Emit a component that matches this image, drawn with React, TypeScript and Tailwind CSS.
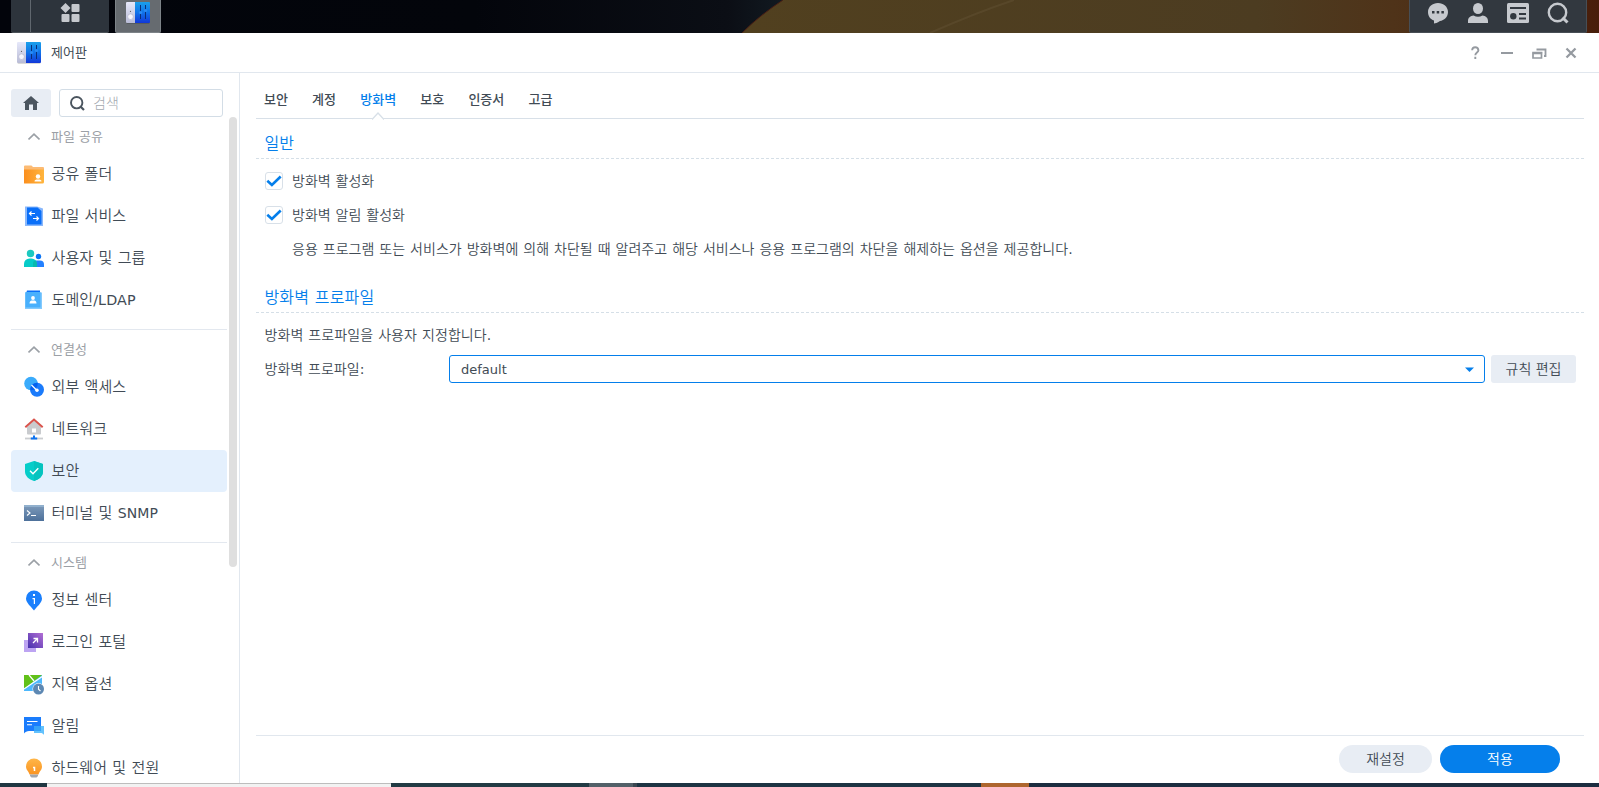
import type { ReactNode } from "react";

type NavItem = { label: ReactNode; icon: ReactNode; active?: boolean };
type NavGroup = { title: string; items: NavItem[] };

function ControlPanelIcon() {
  return (
    <svg width="24" height="22" viewBox="0 0 24 22" className="shrink-0">
      <defs>
        <linearGradient id="cpBlue" x1="0" y1="0" x2="0" y2="1">
          <stop offset="0" stopColor="#1aa0ea" />
          <stop offset="0.5" stopColor="#1173ea" />
          <stop offset="1" stopColor="#1238d8" />
        </linearGradient>
        <linearGradient id="cpGray" x1="0" y1="0" x2="0" y2="1">
          <stop offset="0" stopColor="#e6e8fa" />
          <stop offset="1" stopColor="#b9bcd6" />
        </linearGradient>
      </defs>
      <rect x="0.5" y="20" width="23" height="2" rx="1" fill="#000" opacity="0.15" />
      <path d="M1 0h8v21H1a1 1 0 0 1-1-1V1a1 1 0 0 1 1-1z" fill="url(#cpGray)" />
      <path d="M9 0h14a1 1 0 0 1 1 1v19a1 1 0 0 1-1 1H9z" fill="url(#cpBlue)" />
      <circle cx="4.5" cy="9.3" r="0.6" fill="#555" />
      <circle cx="4.5" cy="14.7" r="2.8" fill="#f4f4fd" stroke="#a9abc4" strokeWidth="0.5" />
      <path d="M14.5 3v14M19.5 3v14" stroke="#0a2f78" strokeWidth="1" />
      <circle cx="14.5" cy="10.5" r="1.6" fill="#2a8cf5" />
      <circle cx="19.5" cy="8.5" r="1.6" fill="#2a8cf5" />
    </svg>
  );
}

function Icon({ children }: { children: ReactNode }) {
  return (
    <svg width="22" height="22" viewBox="0 0 22 22" className="shrink-0">
      {children}
    </svg>
  );
}

const folderIcon = (
  <Icon>
    <defs>
      <linearGradient id="folder" x1="0" x2="1">
        <stop offset="0" stopColor="#fb8f1e" />
        <stop offset="1" stopColor="#ffb53d" />
      </linearGradient>
    </defs>
    <path d="M1 3.5a1 1 0 0 1 1-1h6.5L10 4h10a1 1 0 0 1 1 1v4H1z" fill="#fcbb74" />
    <path d="M1 6.5h20V19a1.5 1.5 0 0 1-1.5 1.5h-18A.5.5 0 0 1 1 20z" fill="url(#folder)" />
    <circle cx="15" cy="13.5" r="2.2" fill="#fff" />
    <path d="M11.5 18.5c0-1.5 1-2 3.5-2s3.5.5 3.5 2z" fill="#fff" />
  </Icon>
);

const fileServiceIcon = (
  <Icon>
    <path d="M2 1.5h12l6 2V21H2z" fill="#8ab8fb" />
    <path d="M4 2.5h10.500l4 3.500V19a.5.5 0 0 1-.5.500H4.500A.5.5 0 0 1 4 19z" fill="#0a6ff8" />
    <path d="M12 8.5H6.500M8.500 6.500l-2 2 2 2M10 13.500h5.500M13.500 11.500l2 2-2 2" fill="none" stroke="#fff" strokeWidth="1.2" />
  </Icon>
);

const usersIcon = (
  <Icon>
    <circle cx="7.5" cy="6.5" r="3.7" fill="#1cc9c0" />
    <path d="M1 20v-3a5.500 5.500 0 0 1 5.500-5.500h2A5.500 5.500 0 0 1 14 17v3z" fill="#06cbc8" />
    <circle cx="15.5" cy="9.5" r="2.7" fill="#0a74f5" />
    <path d="M13 13.500h4a4 4 0 0 1 4 4V20h-7z" fill="#2380ff" />
    <path d="M13 13.500a6 6 0 0 1 1 3.500v3h-4v-3.500a3 3 0 0 1 3-3z" fill="#08b9ae" />
  </Icon>
);

const domainIcon = (
  <Icon>
    <path d="M4 1.500h13v3H3z" fill="#0a6ff8" />
    <path d="M3.500 3.500H19V20H2V3.500z" fill="#84cafd" />
    <path d="M2.500 3H17a.5.5 0 0 1 .5.500v15H2.500z" fill="#49b0fc" />
    <circle cx="10" cy="9" r="1.9" fill="#fff" />
    <path d="M6.500 14.500c0-2.500 1.300-3 3.500-3s3.500.5 3.500 3z" fill="#fff" />
  </Icon>
);

const externalIcon = (
  <Icon>
    <circle cx="8" cy="7.5" r="6.8" fill="#3aabfb" />
    <circle cx="14" cy="13.7" r="7" fill="#1b7bfb" />
    <path d="M7.200 13a7 7 0 0 1 7.600-6.200A7 7 0 0 1 8 14.300z" fill="#0461ee" />
    <path d="M8.500 9l5 5" stroke="#fff" strokeWidth="1.3" />
    <circle cx="14" cy="14.3" r="1.7" fill="#fff" />
  </Icon>
);

const networkIcon = (
  <Icon>
    <path d="M4 9l7-6.500L18 9v6.500a1 1 0 0 1-1 1H5a1 1 0 0 1-1-1z" fill="#c9cbce" />
    <path d="M2.300 9.300L11 1.500l8.700 7.800" fill="none" stroke="#d9534c" strokeWidth="2" />
    <rect x="9" y="10.5" width="4" height="4" fill="#fff" />
    <path d="M2 20.500h18" stroke="#cbcdd0" strokeWidth="1.8" />
    <path d="M10 17.500h2v2h2.200v2H7.800v-2H10z" fill="#0d73f0" />
  </Icon>
);

const shieldIcon = (
  <Icon>
    <path d="M11 1l9 3v7.500c0 4.500-3.800 8-9 9.500-5.200-1.500-9-5-9-9.500V4z" fill="#06cdc9" />
    <path d="M11 1l9 3v7.500c0 4.500-3.800 8-9 9.500z" fill="#05c3bf" />
    <path d="M7 10.700l3 3 5.300-5.500" fill="none" stroke="#fff" strokeWidth="1.4" />
  </Icon>
);

const terminalIcon = (
  <Icon>
    <defs>
      <linearGradient id="term" x1="0" y1="0" x2="0" y2="1">
        <stop offset="0" stopColor="#7e9bbb" />
        <stop offset="1" stopColor="#4d709a" />
      </linearGradient>
    </defs>
    <path d="M1 3h20v16H1z" fill="url(#term)" />
    <path d="M1 3h20v2H1z" fill="#91b0cd" />
    <path d="M4 8.500l3 2.500-3 2.500M8 13.500h5" fill="none" stroke="#fff" strokeWidth="1.1" />
  </Icon>
);

const infoIcon = (
  <Icon>
    <path d="M11 21.500C8.500 18 3 14 3 9.500a8 8 0 0 1 16 0C19 14 13.500 18 11 21.500z" fill="#1a7ffc" />
    <path d="M10 5h2v2h-2zM9.500 9H12v6h-1.200v-4.800H9.500z" fill="#fff" />
  </Icon>
);

const portalIcon = (
  <Icon>
    <defs>
      <linearGradient id="portal" x1="1" y1="0" x2="0" y2="1">
        <stop offset="0" stopColor="#b36fd4" />
        <stop offset="1" stopColor="#4630ae" />
      </linearGradient>
    </defs>
    <rect x="1" y="9" width="12" height="12" fill="#bda4f2" />
    <rect x="5" y="2" width="15" height="15" fill="url(#portal)" />
    <path d="M10 12l4.500-4.500M10.500 7.500h4v4" fill="none" stroke="#fff" strokeWidth="1.3" />
  </Icon>
);

const regionIcon = (
  <Icon>
    <path d="M1 2h18v16H1z" fill="#4db8fd" />
    <path d="M1 2h18L1 16z" fill="#62c119" />
    <path d="M1 16L20 3M6 2l5 6" stroke="#fff" strokeWidth="1.2" />
    <circle cx="15.5" cy="16" r="6" fill="#fff" />
    <circle cx="15.5" cy="16" r="5.5" fill="#5d88b3" />
    <path d="M15.500 13v3.200l2 1.800" fill="none" stroke="#fff" strokeWidth="1.1" />
  </Icon>
);

const notifyIcon = (
  <Icon>
    <path d="M1 2h17v14H6c-2 0-4 1-5 2.500z" fill="#1a7cfc" />
    <path d="M11 11h10v9c-1-1.500-2-2-3.500-2H11z" fill="#63c2fd" />
    <path d="M11 11h7v5h-7z" fill="#35a2f8" />
    <path d="M4 6.500h10.500M4 9.700h5" stroke="#fff" strokeWidth="1.1" />
  </Icon>
);

const powerIcon = (
  <Icon>
    <defs>
      <linearGradient id="bulb" x1="0" y1="0" x2="0" y2="1">
        <stop offset="0" stopColor="#ffb648" />
        <stop offset="1" stopColor="#fa9422" />
      </linearGradient>
    </defs>
    <path d="M11 1.500a8 8 0 0 1 8 8c0 3.500-2.500 4.500-3.500 8h-9C5.500 14 3 13 3 9.500a8 8 0 0 1 8-8z" fill="url(#bulb)" />
    <path d="M7 17.500h8v1.500l-1.500 1.500h-5L7 19z" fill="#a3a7ad" />
    <path d="M10 10.500h1.500V14" fill="none" stroke="#fff" strokeWidth="1.5" />
  </Icon>
);

const groups: NavGroup[] = [
  {
    title: "파일 공유",
    items: [
      { label: "공유 폴더", icon: folderIcon },
      { label: "파일 서비스", icon: fileServiceIcon },
      { label: "사용자 및 그룹", icon: usersIcon },
      { label: <>도메인<span className="text-[14.3px] font-normal">/LDAP</span></>, icon: domainIcon },
    ],
  },
  {
    title: "연결성",
    items: [
      { label: "외부 액세스", icon: externalIcon },
      { label: "네트워크", icon: networkIcon },
      { label: "보안", icon: shieldIcon, active: true },
      { label: <>터미널 및 <span className="text-[14px] font-normal">SNMP</span></>, icon: terminalIcon },
    ],
  },
  {
    title: "시스템",
    items: [
      { label: "정보 센터", icon: infoIcon },
      { label: "로그인 포털", icon: portalIcon },
      { label: "지역 옵션", icon: regionIcon },
      { label: "알림", icon: notifyIcon },
      { label: "하드웨어 및 전원", icon: powerIcon },
    ],
  },
];

const tabs = ["보안", "계정", "방화벽", "보호", "인증서", "고급"];

function Taskbar() {
  return (
    <header className="relative flex h-[33px] shrink-0 justify-between overflow-hidden bg-[#02040a]">
      {/* Wallpaper */}
      <svg className="absolute inset-0" width="1599" height="33" viewBox="0 0 1599 33">
        <defs>
          <linearGradient id="space" x1="0" x2="1">
            <stop offset="0" stopColor="#02040b" />
            <stop offset="0.6" stopColor="#03050b" />
            <stop offset="0.92" stopColor="#0b0e15" />
            <stop offset="1" stopColor="#121b22" />
          </linearGradient>
          <linearGradient id="planet" x1="0" x2="1">
            <stop offset="0" stopColor="#51401f" />
            <stop offset="0.6" stopColor="#4c3c21" />
            <stop offset="0.76" stopColor="#4f3319" />
            <stop offset="1" stopColor="#481e0b" />
          </linearGradient>
        </defs>
        <path d="M0 0h790v33H0z" fill="url(#space)" />
        <path d="M783 0h816v33H742q18-18 41-33z" fill="url(#planet)" />
        <path d="M783 0q-23 15-41 33" stroke="#4a1f14" strokeWidth="1" fill="none" />
        <path d="M930 33q45-20 84-33" stroke="#6a5a3c" strokeWidth="2" fill="none" opacity="0.35" />
      </svg>
      <div className="relative flex h-[33px] pl-[11px]">
        <div className="flex w-[98px] rounded-b-[2px] border-b border-[#4b5258] bg-[#2d343c]">
          <div className="w-5 border-r border-[#60676e]" />
          <div className="flex flex-1 justify-center pt-[3px]">
            <svg width="20" height="20" viewBox="0 0 20 20" fill="#c6c9ce">
              <path d="M5.500 0l5 5-5 5-5-5z" />
              <rect x="11.5" y="1" width="8" height="8" rx="1" />
              <rect x="1.5" y="11" width="8" height="8" rx="1" />
              <rect x="11.5" y="11" width="8" height="8" rx="1" />
            </svg>
          </div>
        </div>
        <div className="ml-1.5 flex w-[46px] justify-center rounded-b-[2px] border border-t-0 border-[#7d8388] bg-[#666b70] pt-0.5">
          <ControlPanelIcon />
        </div>
      </div>
      <div className="relative mr-3 flex h-[33px] w-[178px] rounded-b-[2px] border border-t-0 border-[#474e55] bg-[#32383f] pt-[2px] pl-[17px]">
        <svg width="22" height="22" viewBox="0 0 22 22" className="mr-[18px]">
          <path d="M11 1c5.500 0 10 3.800 10 9s-4 8.500-8 9c-3 2-4.500 2.300-6 2.500v-3C3.500 17.500 1 14 1 10c0-5.200 4.500-9 10-9z" fill="#c6c9ce" />
          <path d="M5 9h2.500v2.500H5zM9.700 9h2.500v2.500H9.700zM14.400 9h2.500v2.500h-2.500z" fill="#32383f" />
        </svg>
        <svg width="22" height="22" viewBox="0 0 22 22" fill="#c6c9ce" className="mr-[18px]">
          <ellipse cx="11" cy="6.5" rx="5" ry="5.5" />
          <path d="M1 21v-2c0-3.500 2.500-5 5.500-5.500q4.500 2.500 9 0c3 .5 5.500 2 5.500 5.500v2z" />
        </svg>
        <svg width="22" height="22" viewBox="0 0 22 22" className="mr-[18px]">
          <rect x="0" y="1" width="22" height="20" rx="1.5" fill="#c6c9ce" />
          <path d="M3 5h16v2H3zM12 11h7v2h-7zM12 15.500h7v2h-7z" fill="#32383f" />
          <circle cx="6.3" cy="14.2" r="3.2" fill="#32383f" />
        </svg>
        <svg width="22" height="22" viewBox="0 0 22 22" fill="none" stroke="#c6c9ce">
          <circle cx="10.5" cy="10.5" r="8.7" strokeWidth="2.4" />
          <path d="M15.500 15.500l5 5" strokeWidth="3" />
        </svg>
      </div>
    </header>
  );
}

function TitleBar() {
  return (
    <div className="flex h-10 shrink-0 items-center border-b border-[#e1e7ee] pr-[22px] pl-[17px]">
      <ControlPanelIcon />
      <h1 className="ml-2.5 flex-1 text-[13px]">제어판</h1>
      <svg width="106" height="14" viewBox="-2 0 106 14" fill="none" stroke="#959aa0">
        <path d="M-.800 4.200V4q0-2.800 3-2.800t3.200 3c0 2.300-3.100 2.300-3.100 5M2.300 10.800v2.200" strokeWidth="1.9" />
        <path d="M28 7h12" strokeWidth="2" />
        <path d="M63.500 3.500h9v6.500h-1.500" strokeWidth="1.8" />
        <path d="M60 7.500h8.500V12H60z" strokeWidth="1.7" />
        <path d="M59.200 6.500h10.200" strokeWidth="1.5" />
        <path d="M93.500 2.500l9 9M102.500 2.500l-9 9" strokeWidth="2.3" />
      </svg>
    </div>
  );
}

function Sidebar() {
  return (
    <aside className="flex w-60 shrink-0 flex-col overflow-hidden border-r border-[#e1e7ee] pt-4">
      <div className="flex h-7 shrink-0 gap-2 pl-[11px]">
        <button className="flex w-10 items-center justify-center rounded-[3px] bg-[#e8edf4]">
          <svg width="16" height="14" viewBox="0 0 16 14">
            <path d="M8 0l8 7h-2v7h-4V8.500H6V14H2V7H0z" fill="#4b555f" />
          </svg>
        </button>
        <div className="flex w-[164px] items-center rounded-[3px] border border-[#d3dde6] pl-2.5">
          <svg width="15" height="15" viewBox="0 0 15 15" fill="none" stroke="#4b555f">
            <circle cx="6.7" cy="6.7" r="5.7" strokeWidth="1.9" />
            <path d="M10.500 10.500l3.500 3.500" strokeWidth="2.2" />
          </svg>
          <span className="ml-2 text-[14px] font-light text-[#a3a9af]">검색</span>
        </div>
      </div>
      <div className="flex min-h-0 flex-1">
        <nav className="w-[227px] pt-1 pl-[11px]">
          {groups.map((group) => (
            <section key={group.title} className="mb-1 border-b border-[#e3e8ef] pb-2 last:border-0">
              <div className="flex h-8 items-center pl-[17px] text-[13px] text-[#9ba0a6]">
                <svg width="12" height="8" viewBox="0 0 12 8" fill="none" stroke="#9ba0a6" strokeWidth="1.7">
                  <path d="M.500 6.500L6 1.200l5.500 5.300" />
                </svg>
                <span className="ml-[11px]">{group.title}</span>
              </div>
              {group.items.map((item, i) => (
                <div
                  key={i}
                  className={`flex h-[42px] items-center rounded-[4px] pl-3 text-[15px] font-[350] tracking-[0.1px] whitespace-nowrap ${
                    item.active ? "bg-[#e4f0fd]" : ""
                  }`}
                >
                  {item.icon}
                  <span className="ml-[6.5px] [word-spacing:0.4px]">{item.label}</span>
                </div>
              ))}
            </section>
          ))}
        </nav>
        <div className="ml-0.5 h-[450px] w-2 rounded-full bg-[#dfdfdf]" />
      </div>
    </aside>
  );
}

function SectionTitle({ children }: { children: ReactNode }) {
  return (
    <div>
      <h2 className="flex h-[31px] items-center pt-[3px] pl-[8.5px] text-[16px] font-[350] tracking-[0.15px] text-[#057feb]">{children}</h2>
      <svg width="1328" height="1" className="block">
        <path d="M0 .5h1328" stroke="#d5dfe7" strokeDasharray="3 2" />
      </svg>
    </div>
  );
}

function Checkbox({ label }: { label: string }) {
  return (
    <label className="flex h-[18px] items-center pl-[9px]">
      <span className="flex h-[18px] w-[18px] items-center justify-center rounded-[3px] border border-[#d8e0e8]">
        <svg width="16" height="16" viewBox="0 0 16 16" fill="none" stroke="#057feb" strokeWidth="2.6" className="shrink-0">
          <path d="M1.300 7.800l4.600 4.200 8.800-8.500" />
        </svg>
      </span>
      <span className="ml-[9px]">{label}</span>
    </label>
  );
}

export default function App() {
  return (
    <div className="flex h-[787px] w-[1599px] flex-col overflow-hidden font-['DejaVu_Sans','Noto_Sans_CJK_KR',sans-serif] text-[#414b55]">
      <Taskbar />
      <div className="flex h-[750px] shrink-0 flex-col rounded-t-[3px] bg-white">
        <TitleBar />
        <div className="flex min-h-0 flex-1">
          <Sidebar />
          <main className="flex flex-1 flex-col pr-[15px] pl-4 font-[350] [word-spacing:0.5px]">
            <div className="flex h-[46px] items-center gap-[24.2px] border-b border-[#d8e0e8] pt-2 pl-2 text-[13px] font-medium">
              {tabs.map((tab) => (
                <div key={tab} className={tab === "방화벽" ? "relative text-[#057feb]" : ""}>
                  {tab}
                  {tab === "방화벽" && (
                    <svg className="absolute top-[22px] left-3 h-2 w-3" viewBox="0 0 12 8">
                      <path d="M0 7.500L6 1l6 6.500V8H0z" fill="#fff" />
                      <path d="M0 7.500L6 1l6 6.500" fill="none" stroke="#d8e0e8" strokeWidth="1.3" />
                    </svg>
                  )}
                </div>
              ))}
            </div>
            <div className="pt-2">
              <SectionTitle>일반</SectionTitle>
            </div>
            <div className="flex flex-col gap-4 pt-[13px] text-[14px]">
              <Checkbox label="방화벽 활성화" />
              <Checkbox label="방화벽 알림 활성화" />
              <p className="h-[18px] pl-9 leading-[18px] tracking-[0.02px]">
                응용 프로그램 또는 서비스가 방화벽에 의해 차단될 때 알려주고 해당 서비스나 응용 프로그램의 차단을 해제하는 옵션을 제공합니다
                <span className="font-normal">.</span>
              </p>
            </div>
            <div className="pt-[23px]">
              <SectionTitle>방화벽 프로파일</SectionTitle>
            </div>
            <p className="mt-3 h-5 pl-[8.5px] text-[14px] leading-5 tracking-[0.07px]">
              방화벽 프로파일을 사용자 지정합니다<span className="font-normal">.</span>
            </p>
            <div className="mt-2.5 flex h-7 items-center pr-2 pl-[8.5px] text-[14px]">
              <span className="w-[184.5px]">
                방화벽 프로파일<span className="font-normal">:</span>
              </span>
              <div className="flex h-7 flex-1 items-center justify-between rounded-[3px] border border-[#057feb] pr-2.5 pl-[11px]">
                <span className="pt-px text-[13px] font-normal">default</span>
                <svg width="9" height="5" viewBox="0 0 9 5">
                  <path d="M0 .5h9L4.500 5z" fill="#057feb" />
                </svg>
              </div>
              <button className="ml-1.5 h-7 w-[85px] rounded-[3px] bg-[#e8edf4]">규칙 편집</button>
            </div>
            <footer className="mt-auto flex h-12 justify-end gap-2 border-t border-[#e1e7ee] pt-[9px] pr-6 text-[14px]">
              <button className="h-7 w-[93px] rounded-full bg-[#e8edf4]">재설정</button>
              <button className="h-7 w-[120px] rounded-full bg-[#057feb] text-white">적용</button>
            </footer>
          </main>
        </div>
      </div>
      {/* Edge of the host desktop */}
      <div className="flex h-1 shrink-0 bg-[#1c2d40]">
        <div className="w-[47px] bg-[#203641]" />
        <div className="w-[344px] border-t border-[#bdbdbd] bg-[#f2f2f2]" />
        <div className="w-[198px] bg-[#223b44]" />
        <div className="w-[44px] bg-[#526068]" />
        <div className="w-[4px] bg-[#3a4751]" />
        <div className="w-[344px] bg-[#1d3443]" />
        <div className="w-[48px] bg-[#ae662e]" />
      </div>
    </div>
  );
}
